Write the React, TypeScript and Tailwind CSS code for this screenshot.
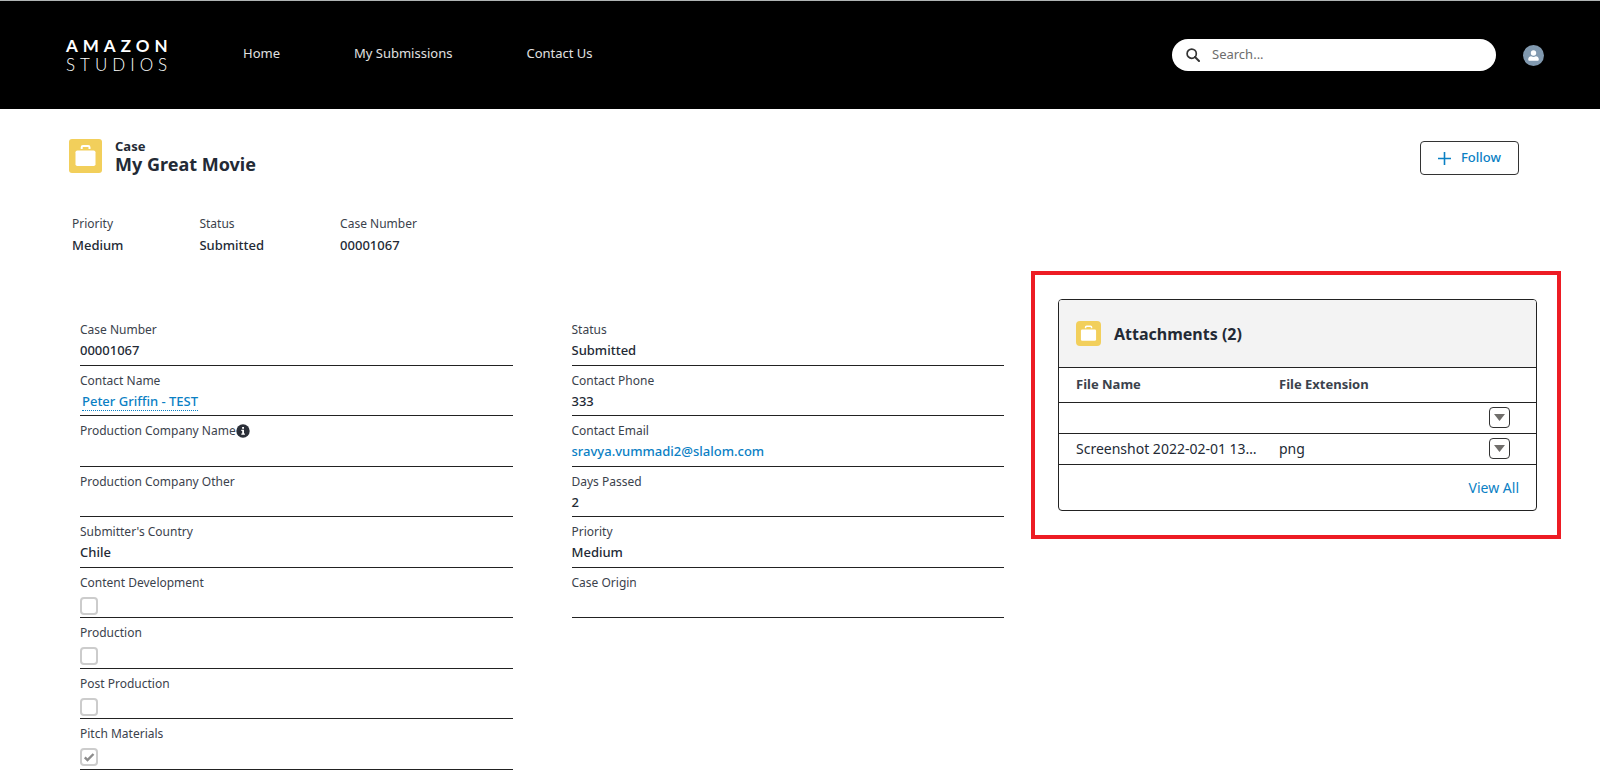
import type { ReactNode } from "react";

type Field = {
  label: string;
  value?: ReactNode;
  info?: boolean;
  checkbox?: boolean;
  checked?: boolean;
};

const leftFields: Field[] = [
  { label: "Case Number", value: "00001067" },
  {
    label: "Contact Name",
    value: (
      <a href="#contact" className="ml-[2px] inline-block border-b border-dotted border-[#0a80c4] leading-[18px] text-[#0a80c4]">
        Peter Griffin - TEST
      </a>
    ),
  },
  { label: "Production Company Name", info: true },
  { label: "Production Company Other" },
  { label: "Submitter's Country", value: "Chile" },
  { label: "Content Development", checkbox: true },
  { label: "Production", checkbox: true },
  { label: "Post Production", checkbox: true },
  { label: "Pitch Materials", checkbox: true, checked: true },
];

const rightFields: Field[] = [
  { label: "Status", value: "Submitted" },
  { label: "Contact Phone", value: "333" },
  {
    label: "Contact Email",
    value: (
      <a href="mailto:sravya.vummadi2@slalom.com" className="text-[#0a80c4]">
        sravya.vummadi2@slalom.com
      </a>
    ),
  },
  { label: "Days Passed", value: "2" },
  { label: "Priority", value: "Medium" },
  { label: "Case Origin" },
];

const summary = [
  { label: "Priority", value: "Medium" },
  { label: "Status", value: "Submitted" },
  { label: "Case Number", value: "00001067" },
];

const files = [
  { name: "", ext: "" },
  { name: "Screenshot 2022-02-01 13…", ext: "png" },
];

function CaseIcon({ className }: { className: string }) {
  return (
    <svg viewBox="0 0 33 34" preserveAspectRatio="none" className={className} aria-hidden="true">
      <path d="M12.700 10V8.300Q12.700 7 14 7h5.200Q20.500 7 20.500 8.300V10" fill="none" stroke="#fff" strokeWidth="2" />
      <rect x="6.500" y="11.500" width="20" height="15.500" rx="1.800" fill="#fff" />
    </svg>
  );
}

function InfoIcon() {
  return (
    <svg viewBox="0 0 14 14" className="size-[14px]" aria-hidden="true">
      <circle cx="7" cy="7" r="6.700" fill="#2b2f38" />
      <path d="M6.100 3h1.900v1.700H6.100zM5.300 5.700H8v3.900h.9v1.200H5.300V9.600h.9V6.900h-.9z" fill="#fff" />
    </svg>
  );
}

function FieldRow({ field }: { field: Field }) {
  const id = field.label.toLowerCase().replace(/[^a-z]+/g, "-");
  return (
    <div className="border-b border-[#222] pt-[5px]">
      <div className="flex h-5 items-center text-[12px] text-[#3b424c]">
        {field.checkbox ? <label htmlFor={id}>{field.label}</label> : <span>{field.label}</span>}
        {field.info && <InfoIcon />}
      </div>
      {field.checkbox ? (
        <span className="mt-1 grid size-[18px]">
          <input
            id={id}
            type="checkbox"
            defaultChecked={field.checked}
            className="peer col-start-1 row-start-1 size-[18px] appearance-none rounded-[4px] border-2 border-[#cccccc] bg-white"
          />
          <svg
            viewBox="0 0 18 18"
            className="pointer-events-none col-start-1 row-start-1 hidden size-[18px] peer-checked:block"
            aria-hidden="true"
          >
            <path d="M4.800 9.300l2.700 2.700 6-6" fill="none" stroke="#8c8c8c" strokeWidth="2.400" />
          </svg>
        </span>
      ) : (
        <div className="mt-px h-5 text-[13px] font-medium leading-[18px]">{field.value}</div>
      )}
    </div>
  );
}

function Header() {
  return (
    <header className="flex h-[109px] items-center border-t border-[#b0b4b4] bg-black pr-14 pl-[66px] text-white">
      <a href="#home" className="flex w-[107px] flex-col font-['Lato',sans-serif] text-[17px] leading-[19px]">
        <span className="font-bold tracking-[5px]">AMAZON</span>
        <span className="font-light tracking-[5px]">STUDIOS</span>
      </a>
      <nav className="mb-[2px] ml-[70px] flex gap-[74px] text-[13px] text-[#e0e0e0]">
        <a href="#home">Home</a>
        <a href="#submissions">My Submissions</a>
        <a href="#contact-us">Contact Us</a>
      </nav>
      <label className="ml-auto flex h-8 w-[324px] items-center rounded-full bg-white pr-4 pl-[14px]">
        <svg viewBox="0 0 14 14" className="size-[14px] shrink-0" aria-hidden="true">
          <circle cx="5.700" cy="5.700" r="4.600" fill="none" stroke="#333" strokeWidth="1.700" />
          <path d="M9 9l4 4" stroke="#333" strokeWidth="2" strokeLinecap="round" />
        </svg>
        <input
          type="search"
          aria-label="Search"
          placeholder="Search..."
          className="ml-3 min-w-0 flex-1 bg-transparent text-[13px] text-[#232f3e] outline-none placeholder:text-[#6d6d6d]"
        />
      </label>
      <button type="button" aria-label="User profile" className="ml-[27px]">
        <svg viewBox="0 0 21 21" className="size-[21px]" aria-hidden="true">
          <circle cx="10.500" cy="10.500" r="10.500" fill="#8199af" />
          <circle cx="10.500" cy="8" r="2.700" fill="#fff" />
          <path d="M5.200 14.500Q5.200 11.700 8.200 11.300Q10.500 12.700 12.800 11.300Q15.800 11.700 15.800 14.500Q15.800 15.800 14.800 15.800H6.200Q5.200 15.800 5.200 14.500Z" fill="#fff" />
        </svg>
      </button>
    </header>
  );
}

function Attachments() {
  return (
    <aside className="border-4 border-[#ed1c24] py-6 pr-5 pl-[23px]">
      <section className="overflow-hidden rounded-[4px] border border-[#222]">
        <div className="flex h-[68px] items-center gap-[13px] border-b border-[#222] bg-[#f3f3f3] px-[17px]">
          <CaseIcon className="size-[25px] rounded-[4px] bg-[#f2cf5b]" />
          <h2 className="text-[16px] font-bold">Attachments (2)</h2>
        </div>
        <table className="w-full table-fixed text-left text-[14px]">
          <colgroup>
            <col className="w-[203px]" />
            <col />
            <col className="w-[47px]" />
          </colgroup>
          <thead>
            <tr className="h-[34px] border-b border-[#222] text-[13px] text-[#3b424c]">
              <th className="pl-[17px] font-bold">File Name</th>
              <th className="pl-[17px] font-bold">File Extension</th>
              <th aria-label="Actions" />
            </tr>
          </thead>
          <tbody>
            {files.map((file, i) => (
              <tr key={i} className="h-[31px] border-b border-[#222]">
                <td className="whitespace-nowrap pl-[17px]">{file.name}</td>
                <td className="pl-[17px]">{file.ext}</td>
                <td>
                  <button
                    type="button"
                    aria-label="Show actions"
                    className="flex size-[21px] items-center justify-center rounded-[4px] border border-[#333]"
                  >
                    <svg viewBox="0 0 11 7" className="h-[7px] w-[11px]" aria-hidden="true">
                      <path d="M0 0h11L5.500 7z" fill="#706e6b" />
                    </svg>
                  </button>
                </td>
              </tr>
            ))}
          </tbody>
        </table>
        <div className="flex h-[45px] items-center justify-end px-[17px] text-[14px]">
          <a href="#attachments" className="text-[#0a80c4]">
            View All
          </a>
        </div>
      </section>
    </aside>
  );
}

export default function App() {
  return (
    <div className="bg-white font-['Noto_Sans',sans-serif] text-[#232a35]">
      <Header />
      <main>
        <div className="flex items-start justify-between pt-[30px] pr-[81px] pl-[69px]">
          <div className="flex items-start gap-[13px]">
            <CaseIcon className="h-[34px] w-[33px] rounded-[3px] bg-[#f2cf5b]" />
            <h1 className="font-bold">
              <span className="block text-[13px] leading-[14px]">Case</span>
              <span className="block text-[18px] leading-[22px]">My Great Movie</span>
            </h1>
          </div>
          <button
            type="button"
            className="mt-[2px] flex h-[34px] items-center gap-[10px] rounded-[4px] border border-[#333] px-[17px] text-[13px] font-medium text-[#0a80c4]"
          >
            <svg viewBox="0 0 13 13" className="size-[13px]" aria-hidden="true">
              <path d="M6.500 0v13M0 6.500h13" stroke="#0a80c4" strokeWidth="1.600" />
            </svg>
            Follow
          </button>
        </div>

        <dl className="mt-[39px] flex gap-[76px] pl-[72px]">
          {summary.map((item) => (
            <div key={item.label}>
              <dt className="text-[12px] leading-5 text-[#3b424c]">{item.label}</dt>
              <dd className="mt-px text-[13px] font-medium leading-5">{item.value}</dd>
            </div>
          ))}
        </dl>

        <div className="mt-4 grid grid-cols-[minmax(0,1fr)_530px] items-start gap-[27px] pr-[39px] pl-20">
          <div className="mt-11 grid min-h-[455px] auto-rows-fr grid-cols-2 gap-x-[59px]">
            {leftFields.map((field, i) => (
              <div key={field.label} className="contents">
                <FieldRow field={field} />
                {rightFields[i] ? <FieldRow field={rightFields[i]} /> : <div />}
              </div>
            ))}
          </div>
          <Attachments />
        </div>
      </main>
    </div>
  );
}
